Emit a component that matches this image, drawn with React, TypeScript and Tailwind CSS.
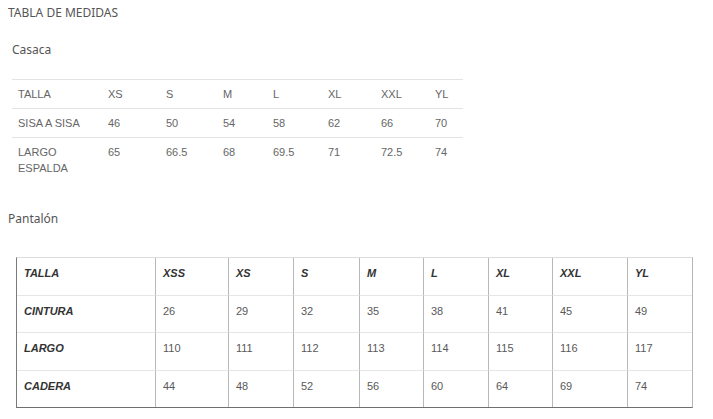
import React from "react";

const casacaHead = ["TALLA", "XS", "S", "M", "L", "XL", "XXL", "YL"];
const casacaRows = [
  ["SISA A SISA", "46", "50", "54", "58", "62", "66", "70"],
  ["LARGO ESPALDA", "65", "66.5", "68", "69.5", "71", "72.5", "74"],
];

const pantalonHead = ["TALLA", "XSS", "XS", "S", "M", "L", "XL", "XXL", "YL"];
const pantalonRows = [
  ["CINTURA", "26", "29", "32", "35", "38", "41", "45", "49"],
  ["LARGO", "110", "111", "112", "113", "114", "115", "116", "117"],
  ["CADERA", "44", "48", "52", "56", "60", "64", "69", "74"],
];

const CasacaTable = () => {
  const rows = [casacaHead, ...casacaRows];
  return (
    <div className="ml-1 w-[451px] grid grid-cols-[90px_58px_57px_50px_55px_53px_54px_34px] font-['Liberation_Sans',Arial,sans-serif] text-[11px] leading-4 text-[#666]">
      {rows.map((row, r) =>
        row.map((cell, c) => (
          <div key={`${r}-${c}`} className="border-t border-[#e3e3e3] px-[6px] py-[6px]">
            {cell}
          </div>
        ))
      )}
    </div>
  );
};

const PantalonTable = () => {
  const rows = [pantalonHead, ...pantalonRows];
  return (
    <div className="ml-2 w-[677px] border-t border-t-[#dcdcdc] border-l border-l-[#7a7a7a] border-b border-b-[#6f6f6f] border-r border-r-[#b5b5b5]">
      <div className="grid grid-cols-[138px_73px_65px_66px_64px_65px_64px_75px_65px] grid-rows-[37px_37px_38px_37px] font-['Liberation_Sans',Arial,sans-serif] text-[11px] leading-4">
        {rows.map((row, r) =>
          row.map((cell, c) => {
            const bold = r === 0 || c === 0;
            return (
              <div
                key={`${r}-${c}`}
                className={`px-[7px] pt-[7px] ${c > 0 ? "border-l border-l-[#b8b8b8]" : ""} ${r > 0 ? "border-t border-t-[#e6e6e6]" : ""} ${bold ? "font-bold italic text-[#333]" : "text-[#595959]"}`}
              >
                {cell}
              </div>
            );
          })
        )}
      </div>
    </div>
  );
};

export default function App() {
  return (
    <div className="w-[713px] h-[419px] bg-white px-2 pt-[5px] font-['Noto_Sans',sans-serif] text-[#555]">
      <div className="text-[12px] leading-4">TABLA DE MEDIDAS</div>
      <div className="ml-1 mt-[21px] text-[12px] leading-4">Casaca</div>
      <div className="mt-[21px]">
        <CasacaTable />
      </div>
      <div className="mt-[29px] text-[12px] leading-4">Pantalón</div>
      <div className="mt-[30px]">
        <PantalonTable />
      </div>
    </div>
  );
}
